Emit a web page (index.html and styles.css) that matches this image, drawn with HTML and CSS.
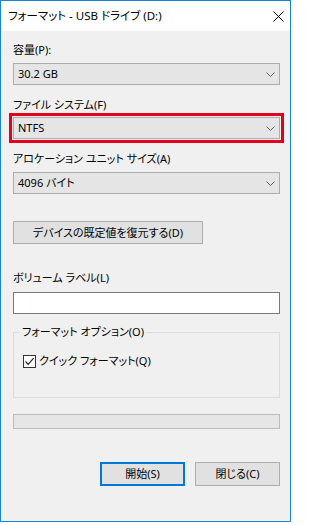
FILE: index.html
```html
<!DOCTYPE html>
<html lang="ja">
<head>
<meta charset="utf-8">
<title>フォーマット - USB ドライブ (D:)</title>
<link rel="stylesheet" href="styles.css">
</head>
<body>
<div class="window">
  <div class="titlebar">
    <span class="title">フォーマット - USB ドライブ (D:)</span>
    <svg class="close" width="11" height="11" viewBox="0 0 11 11"><path d="M0.5 0.5 L10.5 10.5 M10.5 0.5 L0.5 10.5" stroke="#000" stroke-width="1" fill="none"/></svg>
  </div>
  <div class="content">
    <div class="label l-cap">容量(P):</div>
    <div class="select s-cap"><span>30.2 GB</span><svg class="chev" width="9" height="5" viewBox="0 0 9 5"><path d="M0.5 0.5 L4.5 4.5 L8.5 0.5" stroke="#606060" stroke-width="1" fill="none"/></svg></div>

    <div class="label l-fs">ファイル システム(F)</div>
    <div class="select s-fs highlight"><span>NTFS</span><svg class="chev" width="9" height="5" viewBox="0 0 9 5"><path d="M0.5 0.5 L4.5 4.5 L8.5 0.5" stroke="#606060" stroke-width="1" fill="none"/></svg></div>

    <div class="label l-alloc">アロケーション ユニット サイズ(A)</div>
    <div class="select s-alloc"><span>4096 バイト</span><svg class="chev" width="9" height="5" viewBox="0 0 9 5"><path d="M0.5 0.5 L4.5 4.5 L8.5 0.5" stroke="#606060" stroke-width="1" fill="none"/></svg></div>

    <div class="btn btn-default">デバイスの既定値を復元する(D)</div>

    <div class="label l-vol">ボリューム ラベル(L)</div>
    <div class="textbox"></div>

    <fieldset class="group">
      <legend>フォーマット オプション(O)</legend>
      <div class="check-row">
        <span class="checkbox"><svg width="11" height="11" viewBox="0 0 11 11"><path d="M1.5 5.5 L4.2 8.3 L9.6 2.2" stroke="#222" stroke-width="1.2" fill="none"/></svg></span>
        <span>クイック フォーマット(Q)</span>
      </div>
    </fieldset>

    <div class="progress"></div>

    <div class="actions">
      <div class="btn btn-primary">開始(S)</div>
      <div class="btn btn-close">閉じる(C)</div>
    </div>
  </div>
</div>
</body>
</html>
```

FILE: styles.css
```css
html, body {
  margin: 0;
  padding: 0;
  background: #ffffff;
}

body {
  font-family: "Noto Sans", "Noto Sans CJK JP", sans-serif;
  font-size: 11px;
  line-height: 16px;
  color: #000;
  font-feature-settings: "palt";
}

.window {
  width: 291px;
  height: 522px;
  box-sizing: border-box;
  border: 1px solid #1883d7;
  display: flex;
  flex-direction: column;
  background: #f0f0f0;
}

.titlebar {
  height: 30px;
  background: #ffffff;
  display: flex;
  align-items: center;
  justify-content: space-between;
  padding: 0 6px 0 7px;
  flex: none;
}

.title {
  font-size: 11.5px;
}

.close {
  display: block;
}

.content {
  flex: 1;
  padding: 11px 10px 0 12px;
  display: flex;
  flex-direction: column;
}

.label {
  height: 16px;
  white-space: nowrap;
}

.l-fs { margin-top: 12px; }
.l-alloc { margin-top: 12px; }
.l-vol { margin-top: 26px; }

.select {
  height: 22px;
  box-sizing: border-box;
  background: #e5e5e5;
  border: 1px solid #adadad;
  display: flex;
  align-items: center;
  justify-content: space-between;
  padding: 0 4px 0 4px;
}

.select .chev {
  display: block;
}

.s-cap { margin-top: 5px; }
.s-fs { margin-top: 4px; }
.s-alloc { margin-top: 5px; }

.highlight {
  outline: 3px solid #e2001a;
  outline-offset: 1px;
}

.btn {
  box-sizing: border-box;
  background: #e1e1e1;
  border: 1px solid #adadad;
  display: flex;
  align-items: center;
  justify-content: center;
  white-space: nowrap;
}

.btn-default {
  margin-top: 27px;
  width: 190px;
  height: 23px;
}

.textbox {
  margin-top: 6px;
  height: 22px;
  box-sizing: border-box;
  background: #ffffff;
  border: 1px solid #7a7a7a;
}

.group {
  margin: 10px 0 0 0;
  padding: 0 9px 0 9px;
  border: 1px solid #dcdcdc;
  height: 74px;
  box-sizing: border-box;
  min-width: 0;
}

.group legend {
  padding: 0 2px;
  margin-left: -3px;
  line-height: 16px;
}

.check-row {
  margin-top: 13px;
  display: flex;
  align-items: center;
  gap: 3px;
}

.checkbox {
  width: 13px;
  height: 13px;
  box-sizing: border-box;
  border: 1px solid #333;
  background: #fff;
  display: flex;
  align-items: center;
  justify-content: center;
}

.checkbox svg {
  display: block;
}

.progress {
  margin-top: 16px;
  height: 15px;
  box-sizing: border-box;
  background: #e6e6e6;
  border: 1px solid #bcbcbc;
}

.actions {
  margin-top: 33px;
  display: flex;
  justify-content: flex-end;
  gap: 10px;
}

.actions .btn {
  width: 85px;
  height: 24px;
}

.btn-primary {
  border: 2px solid #0078d7;
}
```
